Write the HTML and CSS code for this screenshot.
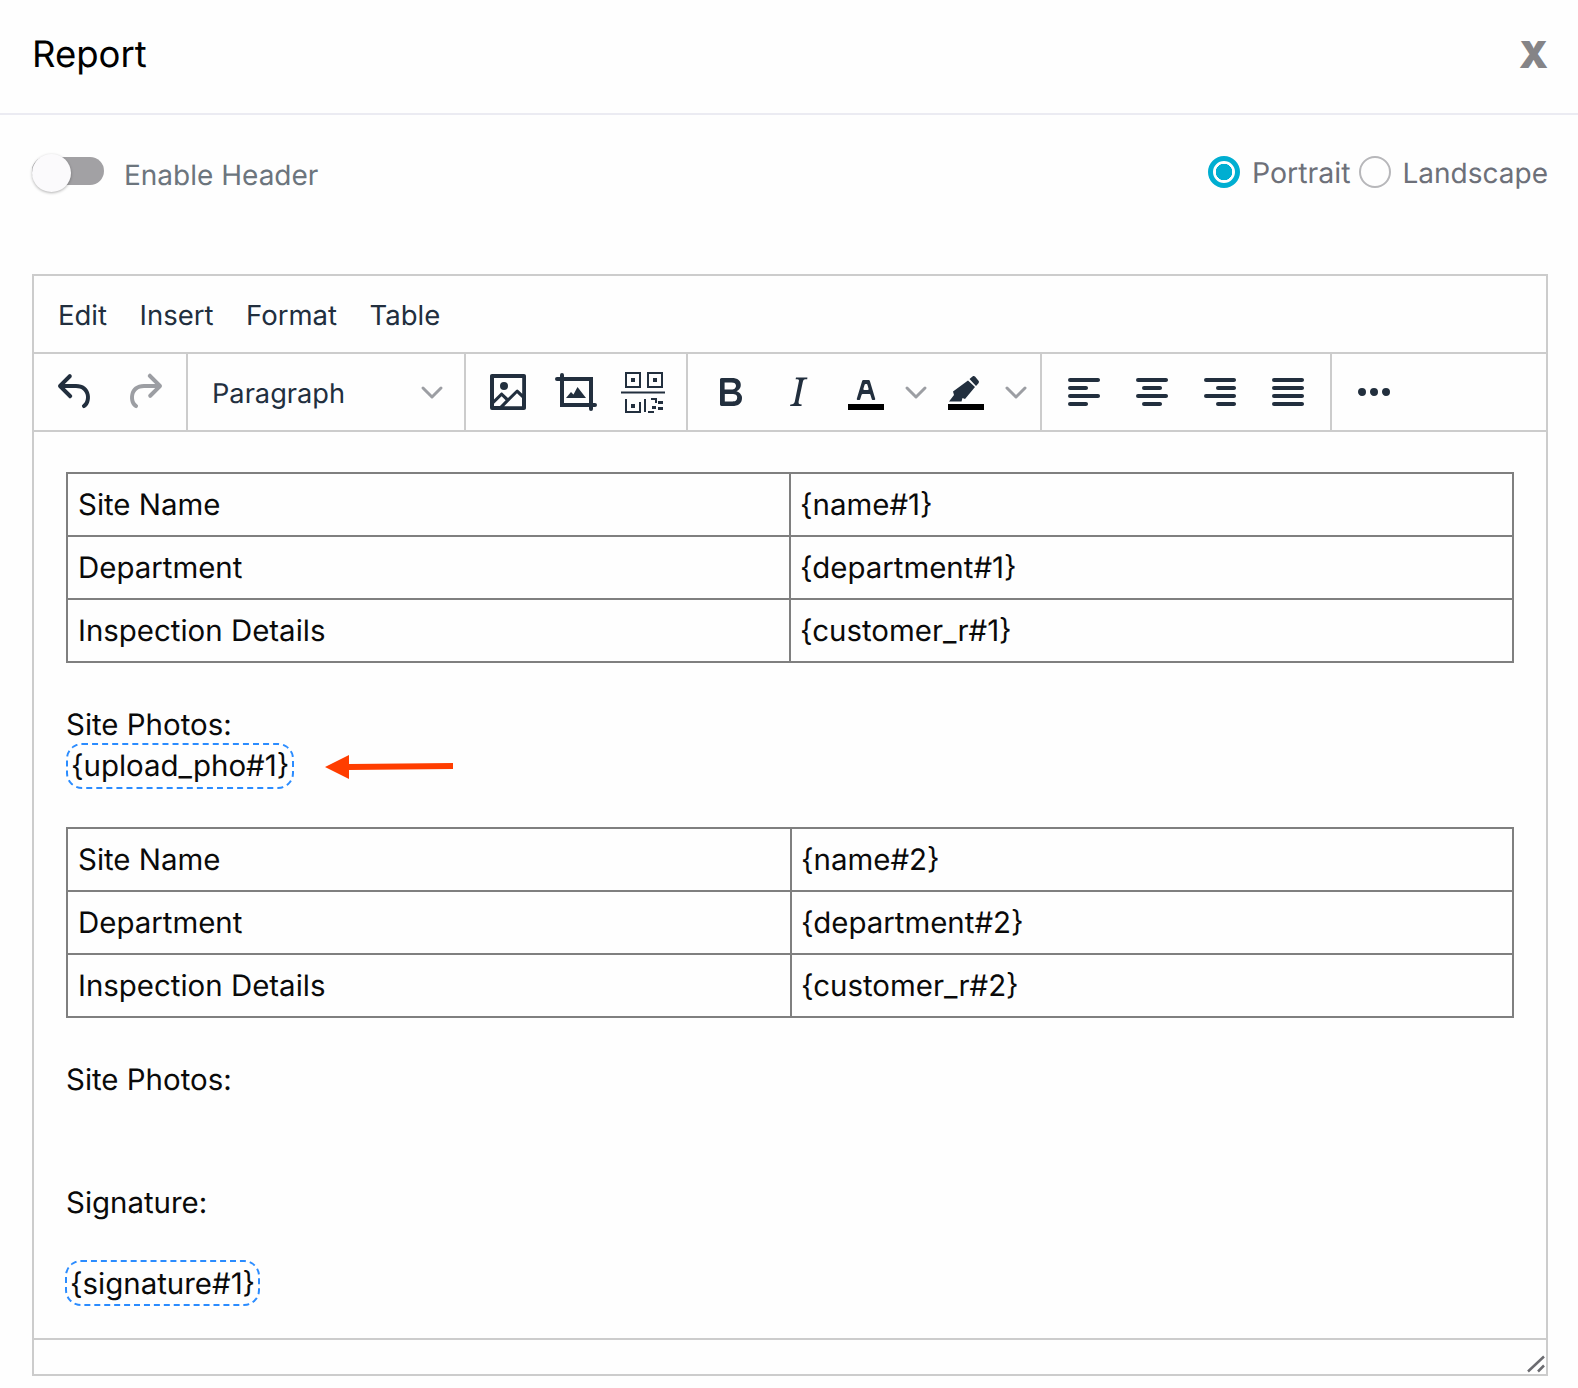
FILE: index.html
```html
<!DOCTYPE html>
<html lang="en">
<head>
<meta charset="utf-8">
<title>Report</title>
<link rel="stylesheet" href="styles.css">
</head>
<body>
<header class="modal-head">
  <h1 class="modal-title">Report</h1>
  <span class="modal-close">X</span>
</header>
<section class="options">
  <div class="switch-wrap">
    <span class="switch"><span class="switch-thumb"></span></span>
    <span class="switch-label">Enable Header</span>
  </div>
  <div class="radios">
    <span class="radio radio-on"></span><span class="radio-label radio-label-portrait">Portrait</span>
    <span class="radio radio-off"></span><span class="radio-label">Landscape</span>
  </div>
</section>
<div class="editor">
  <nav class="menubar">
    <span class="menu-item">Edit</span>
    <span class="menu-item">Insert</span>
    <span class="menu-item">Format</span>
    <span class="menu-item">Table</span>
  </nav>
  <div class="toolbar">
    <div class="group group-history">
      <span class="tool"><svg class="icon" viewBox="0 0 24 24"><path d="M6.4 8H12c3.7 0 6.2 2 6.8 5.1.6 2.7-.4 5.6-2.3 6.8a1 1 0 0 1-1-1.8c1.1-.6 1.8-2.7 1.4-4.6-.5-2.1-2.1-3.5-4.9-3.5H6.4l3.3 3.3a1 1 0 1 1-1.4 1.4l-5-5a1 1 0 0 1 0-1.4l5-5a1 1 0 0 1 1.4 1.4L6.4 8z"/></svg></span>
      <span class="tool tool-off"><svg class="icon" viewBox="0 0 24 24"><path d="M17.6 10H12c-2.8 0-4.4 1.4-4.9 3.5-.4 2 .3 4 1.4 4.6a1 1 0 1 1-1 1.8c-2-1.2-2.9-4.1-2.3-6.8.6-3 3-5.1 6.8-5.1h5.6l-3.3-3.3a1 1 0 1 1 1.4-1.4l5 5a1 1 0 0 1 0 1.4l-5 5a1 1 0 0 1-1.4-1.4l3.3-3.3z"/></svg></span>
    </div>
    <div class="group group-select">
      <span class="select-text">Paragraph</span>
      <svg class="chevron" viewBox="0 0 30 48"><path d="M6 20l9 9 9-9"/></svg>
    </div>
    <div class="group group-insert">
      <span class="tool"><svg class="icon" viewBox="0 0 24 24"><path d="M5 15.7l3.3-3.2c.3-.3.7-.3 1 0L12 15l4.1-4c.3-.4.8-.4 1 0l2 1.9V5H5v10.7zM5 18V19h3l2.8-2.9-2-2L5 17.9zm14-3l-2.5-2.4-6.4 6.5H19v-4zM4 3h16c.6 0 1 .4 1 1v16c0 .6-.4 1-1 1H4a1 1 0 0 1-1-1V4c0-.6.4-1 1-1zm6 8a2 2 0 1 0 0-4 2 2 0 0 0 0 4z"/></svg></span>
      <span class="tool"><svg class="icon" viewBox="0 0 48 48"><path class="line" d="M5 11h34v30M10 7v30h33"/><path d="M14 30l5-6 2.500 2.500L25.500 19 34 30z"/></svg></span>
      <span class="tool"><svg class="icon" viewBox="0 0 48 48"><path class="thin" d="M6 5h14v14H6zM28 5h14v14H28zM6 31v13h14V34M1 24.500h44M25 31v13M31 31h5v4M28 44h6"/><path d="M11 10h4v4h-4zM33 10h4v4h-4zM11 36h4v4h-4zM32 38h4v3h-4zM38 33h5v3h-5zM38 39h5v3h-5z"/></svg></span>
    </div>
    <div class="group group-format">
      <span class="tool"><svg class="icon" viewBox="0 0 24 24"><path d="M7.800 19c-.3 0-.5 0-.6-.2l-.2-.5V5.700c0-.2 0-.4.2-.5l.6-.2h5c1.500 0 2.700.3 3.500 1 .7.6 1.100 1.400 1.100 2.500a3 3 0 0 1-.6 1.900c-.4.6-1 1-1.600 1.200.4.1.9.3 1.300.6s.8.7 1 1.200c.4.4.5 1 .5 1.600 0 1.300-.4 2.300-1.300 3-.8.7-2.100 1-3.800 1H7.800zm5-8.300c.6 0 1.200-.1 1.600-.5.4-.3.6-.7.6-1.300 0-1.100-.8-1.700-2.300-1.700H9.300v3.500h3.400zm.5 6c.7 0 1.300-.1 1.700-.4.4-.4.6-.9.6-1.500s-.2-1-.7-1.400c-.4-.3-1-.4-2-.4H9.400v3.800h4z"/></svg></span>
      <span class="tool"><svg class="icon" viewBox="0 0 24 24"><path d="M16.700 4.700l-.1.9h-.3c-.6 0-1 0-1.400.3-.3.3-.4.6-.5 1.100l-2.100 9.800v.6c0 .5.4.8 1.400.8h.2l-.2.8H8l.2-.8h.2c1.100 0 1.800-.5 2-1.500l2-9.800.1-.5c0-.6-.4-.8-1.400-.8h-.3l.2-.9h5.800z"/></svg></span>
      <span class="tool"><svg class="icon" viewBox="0 0 24 24"><path class="black" d="M3 18h18v3H3z"/><path d="M8.700 16h-.8a.5.5 0 0 1-.5-.6l2.700-9c.1-.3.3-.4.5-.4h2.800c.2 0 .4.1.5.4l2.700 9a.5.5 0 0 1-.5.6h-.8a.5.5 0 0 1-.4-.4l-.7-2.200c0-.3-.3-.4-.5-.4h-3.400c-.2 0-.4.1-.5.4l-.7 2.200c0 .3-.2.4-.4.4zm2.600-7.600l-.6 2a.5.5 0 0 0 .5.6h1.600a.5.5 0 0 0 .5-.6l-.6-2c0-.3-.3-.4-.5-.4h-.4c-.2 0-.4.1-.5.4z"/></svg></span>
      <span class="tool-arrow"><svg class="chevron" viewBox="0 0 30 48"><path d="M6 20l9 9 9-9"/></svg></span>
      <span class="tool tool-pen"><svg class="icon" viewBox="0 0 48 48"><path class="black" d="M6 36h36v6H6z"/><path d="M27.500 11l3-2.500c.8-.6 1.800-.6 2.500.1l3.500 4.200c.6.800.6 1.700 0 2.400l-2.500 2.800zM26 12.500l7 6.500-10 12-2.500-1-1 3.500H7l5-6.500-1-3.500z"/></svg></span>
      <span class="tool-arrow"><svg class="chevron" viewBox="0 0 30 48"><path d="M6 20l9 9 9-9"/></svg></span>
    </div>
    <div class="group group-align">
      <span class="tool"><svg class="icon" viewBox="0 0 24 24"><path d="M5 5h14c.6 0 1 .4 1 1s-.4 1-1 1H5a1 1 0 1 1 0-2zm0 4h8c.6 0 1 .4 1 1s-.4 1-1 1H5a1 1 0 1 1 0-2zm0 8h8c.6 0 1 .4 1 1s-.4 1-1 1H5a1 1 0 0 1 0-2zm0-4h14c.6 0 1 .4 1 1s-.4 1-1 1H5a1 1 0 0 1 0-2z"/></svg></span>
      <span class="tool"><svg class="icon" viewBox="0 0 24 24"><path d="M5 5h14c.6 0 1 .4 1 1s-.4 1-1 1H5a1 1 0 1 1 0-2zm3 4h8c.6 0 1 .4 1 1s-.4 1-1 1H8a1 1 0 1 1 0-2zm0 8h8c.6 0 1 .4 1 1s-.4 1-1 1H8a1 1 0 0 1 0-2zm-3-4h14c.6 0 1 .4 1 1s-.4 1-1 1H5a1 1 0 0 1 0-2z"/></svg></span>
      <span class="tool"><svg class="icon" viewBox="0 0 24 24"><path d="M5 5h14c.6 0 1 .4 1 1s-.4 1-1 1H5a1 1 0 1 1 0-2zm6 4h8c.6 0 1 .4 1 1s-.4 1-1 1h-8a1 1 0 0 1 0-2zm0 8h8c.6 0 1 .4 1 1s-.4 1-1 1h-8a1 1 0 0 1 0-2zm-6-4h14c.6 0 1 .4 1 1s-.4 1-1 1H5a1 1 0 0 1 0-2z"/></svg></span>
      <span class="tool"><svg class="icon" viewBox="0 0 24 24"><path d="M5 5h14c.6 0 1 .4 1 1s-.4 1-1 1H5a1 1 0 1 1 0-2zm0 4h14c.6 0 1 .4 1 1s-.4 1-1 1H5a1 1 0 1 1 0-2zm0 4h14c.6 0 1 .4 1 1s-.4 1-1 1H5a1 1 0 0 1 0-2zm0 4h14c.6 0 1 .4 1 1s-.4 1-1 1H5a1 1 0 0 1 0-2z"/></svg></span>
    </div>
    <div class="group group-more">
      <span class="tool"><svg class="icon" viewBox="0 0 24 24"><path d="M6 10a2 2 0 0 0-2 2c0 1.100.9 2 2 2a2 2 0 0 0 2-2 2 2 0 0 0-2-2zm12 0a2 2 0 0 0-2 2c0 1.100.9 2 2 2a2 2 0 0 0 2-2 2 2 0 0 0-2-2zm-6 0a2 2 0 0 0-2 2c0 1.100.9 2 2 2a2 2 0 0 0 2-2 2 2 0 0 0-2-2z"/></svg></span>
    </div>
  </div>
  <div class="content">
    <table class="data-table table-one">
      <tr><td class="cell-key">Site Name</td><td>{name#1}</td></tr>
      <tr><td class="cell-key">Department</td><td>{department#1}</td></tr>
      <tr><td class="cell-key">Inspection Details</td><td>{customer_r#1}</td></tr>
    </table>
    <p class="para para-photos">Site Photos:</p>
    <p class="para para-chip"><span class="chip">{upload_pho#1}</span><svg class="arrow" viewBox="0 0 130 26"><path d="M0 13L24 1v9l104 -1v6L24 16v9z"/></svg></p>
    <table class="data-table table-two">
      <tr><td class="cell-key">Site Name</td><td>{name#2}</td></tr>
      <tr><td class="cell-key">Department</td><td>{department#2}</td></tr>
      <tr><td class="cell-key">Inspection Details</td><td>{customer_r#2}</td></tr>
    </table>
    <p class="para para-photos">Site Photos:</p>
    <p class="para para-signature">Signature:</p>
    <p class="para para-sign-chip"><span class="chip chip-sign">{signature#1}</span></p>
  </div>
  <div class="statusbar">
    <svg class="resize" viewBox="0 0 20 18"><path d="M2 16.500L18 1.500M12 16.500l6-6"/></svg>
  </div>
</div>
</body>
</html>
```
FILE: styles.css
```css
* { box-sizing: border-box; }
html, body { margin: 0; padding: 0; }
body {
  background: #fefefe;
  font-family: Inter, "Liberation Sans", sans-serif;
  color: #0a0a0a;
  height: 1388px;
  overflow: hidden;
  text-rendering: geometricPrecision;
}
.modal-head {
  height: 115px;
  border-bottom: 2px solid #ebebf2;
  display: flex;
  justify-content: space-between;
  align-items: center;
  padding: 0 30px 6px 32px;
}
.modal-title { margin: 0; font-size: 36.500px; font-weight: 400; color: #000; }
.modal-close { font-size: 37px; font-weight: 900; color: #858487; padding-top: 2px; }
.options {
  height: 159px;
  display: flex;
  justify-content: space-between;
  align-items: flex-start;
  padding: 38px 30px 0 32px;
}
.switch-wrap { display: flex; align-items: center; }
.switch {
  position: relative;
  display: block;
  width: 72px;
  height: 28px;
  margin-top: -3px;
  margin-right: 20px;
  border-radius: 14px;
  background: #a2a1a4;
}
.switch-thumb {
  position: absolute;
  left: 0;
  top: -3px;
  width: 39px;
  height: 38px;
  border-radius: 50%;
  background: #fbfafc;
  box-shadow: 0 1px 3px rgba(0, 0, 0, .3);
}
.switch-label { font-size: 28px; color: #6c757d; padding-top: 5px; }
.radios { display: flex; align-items: center; margin-top: 0; }
.radio { width: 32px; height: 32px; border-radius: 50%; display: block; }
.radio-on {
  border: 5px solid #00aed1;
  background: radial-gradient(circle, #00aed1 0 8px, #fefefe 8.500px);
}
.radio-off { border: 2px solid #b7b7ba; margin-left: 8px; }
.radio-label { font-size: 28px; color: #6d7079; margin-left: 12px; padding-top: 2px; }
.radio-label-portrait { margin-left: 12px; font-size: 28.500px; }
.editor {
  margin: 0 30px 0 32px;
  height: 1102px;
  border: 2px solid #ccc;
  display: flex;
  flex-direction: column;
}
.menubar {
  height: 78px;
  border-bottom: 2px solid #ccc;
  display: flex;
  align-items: center;
  gap: 32.500px;
  padding: 2px 0 0 24px;
  font-size: 27.500px;
  color: #222f3e;
}
.toolbar {
  height: 78px;
  border-bottom: 2px solid #ccc;
  display: flex;
  align-items: stretch;
}
.group {
  display: flex;
  align-items: center;
  border-right: 2px solid #ccc;
}
.group-history { width: 154px; padding-left: 8px; }
.group-select { width: 278px; padding-left: 24px; justify-content: space-between; padding-right: 17px; }
.group-insert { width: 222px; padding-left: 8px; }
.group-format { width: 354px; padding-left: 8px; }
.group-align { width: 290px; padding-left: 8px; }
.group-more { border-right: 0; padding-left: 8px; }
.tool { width: 68px; display: flex; justify-content: center; align-items: center; }
.tool-pen { width: 69px; }
.tool-arrow { width: 31px; display: flex; justify-content: center; }
.tool-off .icon { fill: #9c9ea3; }
.icon { width: 48px; height: 48px; fill: #222f3e; display: block; }
.icon .black { fill: #000; }
.icon .line { fill: none; stroke: #222f3e; stroke-width: 4; stroke-linecap: round; }
.icon .thin { fill: none; stroke: #222f3e; stroke-width: 2; }
.chevron { width: 30px; height: 48px; display: block; fill: none; stroke: #9c9ea3; stroke-width: 3; stroke-linecap: round; stroke-linejoin: round; }
.select-text { font-size: 27.200px; color: #222f3e; padding-top: 2px; }
.content { flex: 1; padding: 40px 32px 0; color: #0a0a0a; font-size: 29.450px; }
.data-table { width: 100%; border-collapse: collapse; table-layout: fixed; }
.data-table td {
  height: 63px;
  border: 2px solid #7f7f7f;
  padding: 1px 9px 0;
  line-height: 38px;
  white-space: nowrap;
}
.data-table .cell-key { padding-left: 10px; }
.table-one .cell-key { width: 723px; }
.table-two .cell-key { width: 724px; }
.para { margin: 0; line-height: 41px; }
.para-photos { margin-top: 40px; height: 40px; line-height: 45px; }
.para-chip { display: flex; align-items: center; height: 46px; margin-bottom: 38px; }
.para-signature { margin-top: 85px; height: 41px; }
.para-sign-chip { margin-top: 36px; height: 46px; }
.chip {
  display: inline-block;
  height: 46px;
  line-height: 43px;
  padding: 0 3px;
  border: 2px dashed #2b8cff;
  border-radius: 16px;
}
.chip-sign { margin-left: -1px; line-height: 45px; }
.arrow { width: 130px; height: 26px; margin: 2px 0 0 31px; fill: #ff3d00; display: block; }
.statusbar {
  height: 36px;
  border-top: 2px solid #ccc;
  display: flex;
  justify-content: flex-end;
  align-items: flex-end;
}
.resize { width: 20px; height: 18px; margin: 0 0 1px 0; fill: none; stroke: #6b6b70; stroke-width: 2.500; }
```
